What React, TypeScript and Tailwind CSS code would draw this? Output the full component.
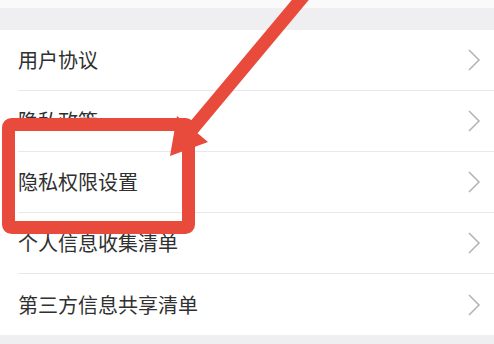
const items = ['用户协议', '隐私政策', '隐私权限设置', '个人信息收集清单', '第三方信息共享清单']

function Chevron() {
  return (
    <svg width="14" height="22" viewBox="0 0 14 22" className="shrink-0">
      <polyline points="2,1 12,11 2,21" fill="none" stroke="#b3b3b3" strokeWidth="1.5" />
    </svg>
  )
}

export default function App() {
  return (
    <div
      className="relative w-[494px] h-[344px] overflow-hidden bg-white"
      style={{ fontFamily: '"Noto Sans CJK SC", "Noto Sans", sans-serif' }}
    >
      <div className="h-2 bg-[#fafafa]" />
      <div className="h-[22px] bg-[#efeff2]" />

      <div className="bg-white">
        {items.map((label, i) => (
          <div key={label} className="pl-[18px]">
            <div
              className={`flex items-center justify-between h-[61px] pr-[13px] ${
                i < items.length - 1 ? 'border-b border-[#e8e8e8]' : ''
              }`}
            >
              <span className="text-[20px] leading-none text-[#303030]">{label}</span>
              <Chevron />
            </div>
          </div>
        ))}
      </div>

      <div className="h-[9px] bg-[#efeff2]" />

      {/* red annotation over the list */}
      <svg className="absolute left-0 top-0" width="494" height="344" viewBox="0 0 494 344">
        <rect
          x="8.5"
          y="124.5"
          width="180"
          height="103"
          rx="3"
          fill="none"
          stroke="#e84a3b"
          strokeWidth="13"
        />
        <line x1="312" y1="-14" x2="190" y2="132" stroke="#e84a3b" strokeWidth="13" />
        <polygon points="177,116 208,142 170,156" fill="#e84a3b" />
      </svg>
    </div>
  )
}
